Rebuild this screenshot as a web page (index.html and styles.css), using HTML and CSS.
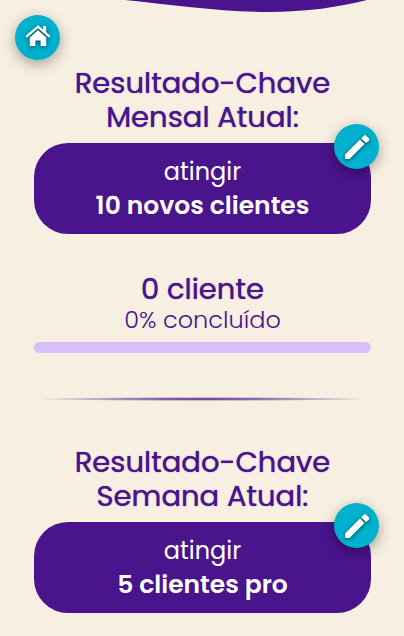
FILE: index.html
```html
<!DOCTYPE html>
<html lang="pt-BR">
<head>
<meta charset="utf-8">
<meta name="viewport" content="width=device-width, initial-scale=1">
<title>Resultado-Chave</title>
<link rel="stylesheet" href="styles.css">
</head>
<body>
<svg class="wave" viewBox="0 0 404 13" aria-hidden="true"><path d="M125 0C175 5 220 12 268 12C306 12 340 7 367 0Z"/></svg>
<a class="round home" href="#" aria-label="Início">
  <svg class="icon" viewBox="0 0 28 28" aria-hidden="true">
    <path d="M3 14.2 14 4.6l11 9.6" fill="none" stroke="currentColor" stroke-width="2.2" stroke-linecap="round" stroke-linejoin="round"/>
    <path d="M19.200 4h3v7.600l-3-2.600z" fill="currentColor"/>
    <path d="M14 8.200 22.200 15.500v8.500H16.600v-5.500h-5.200v5.500H5.800v-8.500z" fill="currentColor"/>
  </svg>
</a>
<main class="page">
  <section class="goal">
    <h2 class="title">Resultado-Chave<br>Mensal Atual:</h2>
    <div class="card">
      <p class="verb">atingir</p>
      <p class="target">10 novos clientes</p>
      <button class="round edit" type="button" aria-label="Editar resultado mensal">
        <svg class="icon" viewBox="0 0 28 28" aria-hidden="true"><path d="M2 21.500 17 6.500l4.500 4.500L6.500 26H2zM18.200 5.300 20.800 2.700Q22 1.500 23.200 2.700L25.800 5.300Q27 6.500 25.800 7.700L23 10.100z" fill="currentColor"/></svg>
      </button>
    </div>
    <div class="status">
      <p class="count">0 cliente</p>
      <p class="percent" id="percent">0% concluído</p>
    </div>
    <div class="bar" role="progressbar" aria-labelledby="percent" aria-valuemin="0" aria-valuemax="100" aria-valuenow="0"></div>
  </section>
  <hr class="divider">
  <section class="goal">
    <h2 class="title">Resultado-Chave<br>Semana Atual:</h2>
    <div class="card">
      <p class="verb">atingir</p>
      <p class="target">5 clientes pro</p>
      <button class="round edit" type="button" aria-label="Editar resultado semanal">
        <svg class="icon" viewBox="0 0 28 28" aria-hidden="true"><path d="M2 21.500 17 6.500l4.500 4.500L6.500 26H2zM18.200 5.300 20.800 2.700Q22 1.500 23.200 2.700L25.800 5.300Q27 6.500 25.800 7.700L23 10.100z" fill="currentColor"/></svg>
      </button>
    </div>
  </section>
</main>
</body>
</html>
```
FILE: styles.css
```css
* {
  box-sizing: border-box;
}

body {
  margin: 0;
  background: #f7f0e2;
  color: #4a148c;
  font-family: Poppins, Inter, sans-serif;
}

h2,
p {
  margin: 0;
}

.wave {
  position: absolute;
  top: 0;
  left: 0;
  width: 100%;
  fill: #4a148c;
}

.page {
  padding: 66px 33px 22px 34px;
  text-align: center;
}

.round {
  position: absolute;
  display: flex;
  align-items: center;
  justify-content: center;
  width: 45px;
  height: 45px;
  padding: 0;
  border: 0;
  border-radius: 50%;
  background: #00b1ce;
  color: #fff;
  box-shadow: 0 4px 14px rgb(0 0 0 / 35%);
}

.icon {
  width: 28px;
  height: 28px;
  filter: drop-shadow(0 1px 2px rgb(0 0 0 / 60%));
}

.home {
  top: 15px;
  left: 15px;
}

.home .icon {
  margin-bottom: 4px;
}

.edit {
  top: -19px;
  right: -8px;
}

.title {
  font-size: 29px;
  font-weight: 400;
  line-height: 34px;
  text-shadow: 0 0 1px currentcolor;
}

.card {
  position: relative;
  margin-top: 9px;
  padding: 12px 16px 11px;
  border-radius: 34px;
  background: #4a148c;
  color: #fff;
  font-size: 24px;
  line-height: 34px;
}

.target {
  font-size: 25px;
  font-weight: 600;
}

.status {
  margin-top: 38px;
}

.count {
  font-size: 29px;
  font-weight: 400;
  line-height: 34px;
  text-shadow: 0 0 1px currentcolor;
}

.percent {
  font-size: 24px;
  font-weight: 300;
  line-height: 28px;
}

.bar {
  height: 11px;
  margin-top: 8px;
  border-radius: 6px;
  background: #d9bff8;
}

.divider {
  height: 4px;
  margin: 44px 0;
  border: 0;
  background: radial-gradient(closest-side, #4a148c, transparent);
}
```
